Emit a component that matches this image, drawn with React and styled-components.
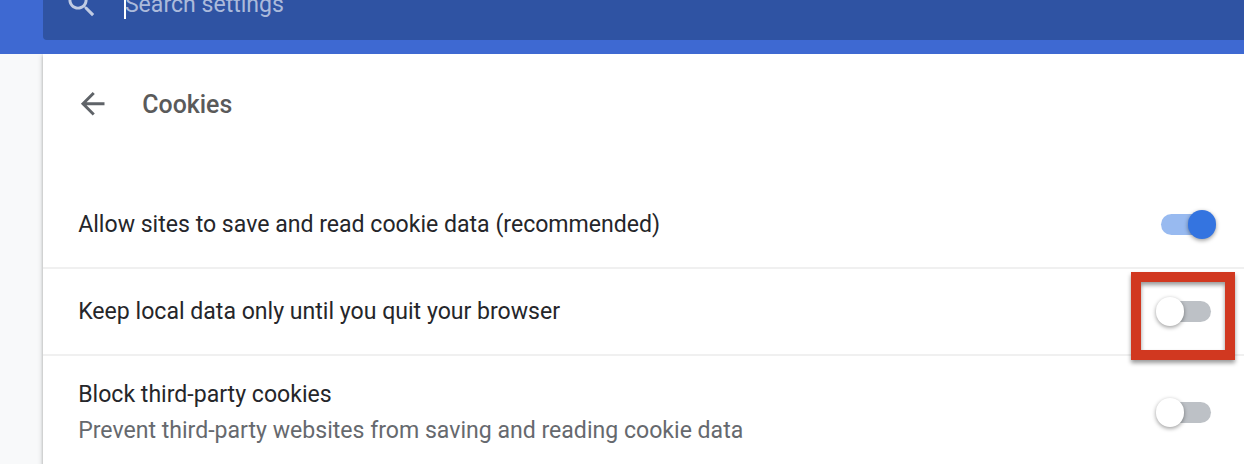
import React from 'react'
import styled, { createGlobalStyle } from 'styled-components'

const settings = [
  { label: 'Allow sites to save and read cookie data (recommended)', checked: true },
  { label: 'Keep local data only until you quit your browser', highlighted: true },
  {
    label: 'Block third-party cookies',
    description: 'Prevent third-party websites from saving and reading cookie data',
    tall: true
  }
]

const Toggle = ({ checked }) => (
  <Track role="switch" aria-checked={!!checked} $checked={checked}>
    <Knob $checked={checked} />
  </Track>
)

const App = () => {
  return (
    <>
      <GlobalStyle />
      <Toolbar>
        <SearchBox>
          <SearchIcon viewBox="0 0 24 24">
            <path d="M15.5 14h-.79l-.28-.27C15.41 12.59 16 11.11 16 9.5 16 5.91 13.09 3 9.5 3S3 5.91 3 9.5 5.91 16 9.5 16c1.61 0 3.09-.59 4.23-1.57l.27.28v.79l5 4.99L20.49 19l-4.99-5zm-6 0C7.01 14 5 11.99 5 9.5S7.01 5 9.5 5 14 7.01 14 9.5 11.99 14 9.5 14z" />
          </SearchIcon>
          <Caret />
          <Placeholder>Search settings</Placeholder>
        </SearchBox>
      </Toolbar>
      <Content>
        <Card>
          <Header>
            <BackIcon viewBox="0 0 24 24">
              <path d="M20 11H7.83l5.59-5.59L12 4l-8 8 8 8 1.41-1.41L7.83 13H20v-2z" />
            </BackIcon>
            <Title>Cookies</Title>
          </Header>
          {settings.map(setting => (
            <Row key={setting.label} $tall={setting.tall}>
              <div>
                <Label>{setting.label}</Label>
                {setting.description && <Description>{setting.description}</Description>}
              </div>
              <Toggle checked={setting.checked} />
              {setting.highlighted && <Highlight />}
            </Row>
          ))}
        </Card>
      </Content>
    </>
  )
}

export default App

const GlobalStyle = createGlobalStyle`
  * {
    box-sizing: border-box;
  }

  body {
    margin: 0;
    overflow: hidden;
    background: #f8f9fa;
    font-family: Roboto, sans-serif;
    font-size: 23.08px;
  }
`

const Toolbar = styled.header`
  height: 54px;
  padding-left: 43px;
  overflow: hidden;
  background: #3e69d2;
`

const SearchBox = styled.div`
  display: flex;
  align-items: center;
  height: 71px;
  margin-top: -31px;
  padding-left: 20.5px;
  border-radius: 4px 0 0 4px;
  background: #2f53a3;
`

const SearchIcon = styled.svg`
  width: 35.4px;
  height: 35.4px;
  margin-top: -1px;
  flex-shrink: 0;
  fill: #c0cbe3;
`

const Caret = styled.span`
  width: 2px;
  height: 28px;
  margin-left: 25px;
  margin-right: -1px;
  background: #fff;
`

const Placeholder = styled.span`
  line-height: 28px;
  color: #abbadb;
`

const Content = styled.main`
  height: 410px;
  padding-left: 43px;
  overflow: hidden;
`

const Card = styled.section`
  height: 440px;
  background: #fff;
  box-shadow: 0 1px 3px rgba(60, 64, 67, 0.35), 0 2px 5px 1px rgba(60, 64, 67, 0.15);
`

const Header = styled.div`
  display: flex;
  align-items: center;
  height: 100px;
  padding-left: 32px;
  margin-bottom: 28px;
`

const BackIcon = styled.svg`
  width: 35.4px;
  height: 35.4px;
  fill: #5f6368;
`

const Title = styled.h2`
  margin: 2px 0 0 31.9px;
  font-size: 24.9px;
  line-height: 30px;
  font-weight: 500;
  color: #5a5a5a;
`

const Row = styled.div`
  position: relative;
  display: flex;
  align-items: center;
  justify-content: space-between;
  height: ${props => props.$tall ? '115px' : '87px'};
  padding: 0 33px 0 35.2px;

  ${Header} + & {
    height: 85px;
  }

  & + & {
    border-top: 2px solid #f0f0f0;
  }
`

const Label = styled.div`
  line-height: 35.4px;
  color: #25262a;
`

const Description = styled(Label)`
  color: #66696e;
`

const Track = styled.div`
  display: flex;
  align-items: center;
  width: 50px;
  height: 21px;
  padding-left: ${props => props.$checked ? '26.5px' : '0'};
  border-radius: 11px;
  background: ${props => props.$checked ? '#98baf0' : '#bdc1c6'};
`

const Knob = styled.div`
  width: 28.4px;
  height: 28.4px;
  flex-shrink: 0;
  margin-left: ${props => props.$checked ? '0' : '-5.5px'};
  border-radius: 50%;
  background: ${props => props.$checked ? '#3474e0' : '#fff'};
  box-shadow: 0 1.5px 4px rgba(0, 0, 0, 0.4);
`

// red frame drawn over the switch
const Highlight = styled.div`
  position: absolute;
  top: 3px;
  right: 9px;
  width: 104px;
  height: 88px;
  z-index: 1;
  border: 10px solid #d13820;
  filter: drop-shadow(0 3px 2px rgba(0, 0, 0, 0.4));
`
